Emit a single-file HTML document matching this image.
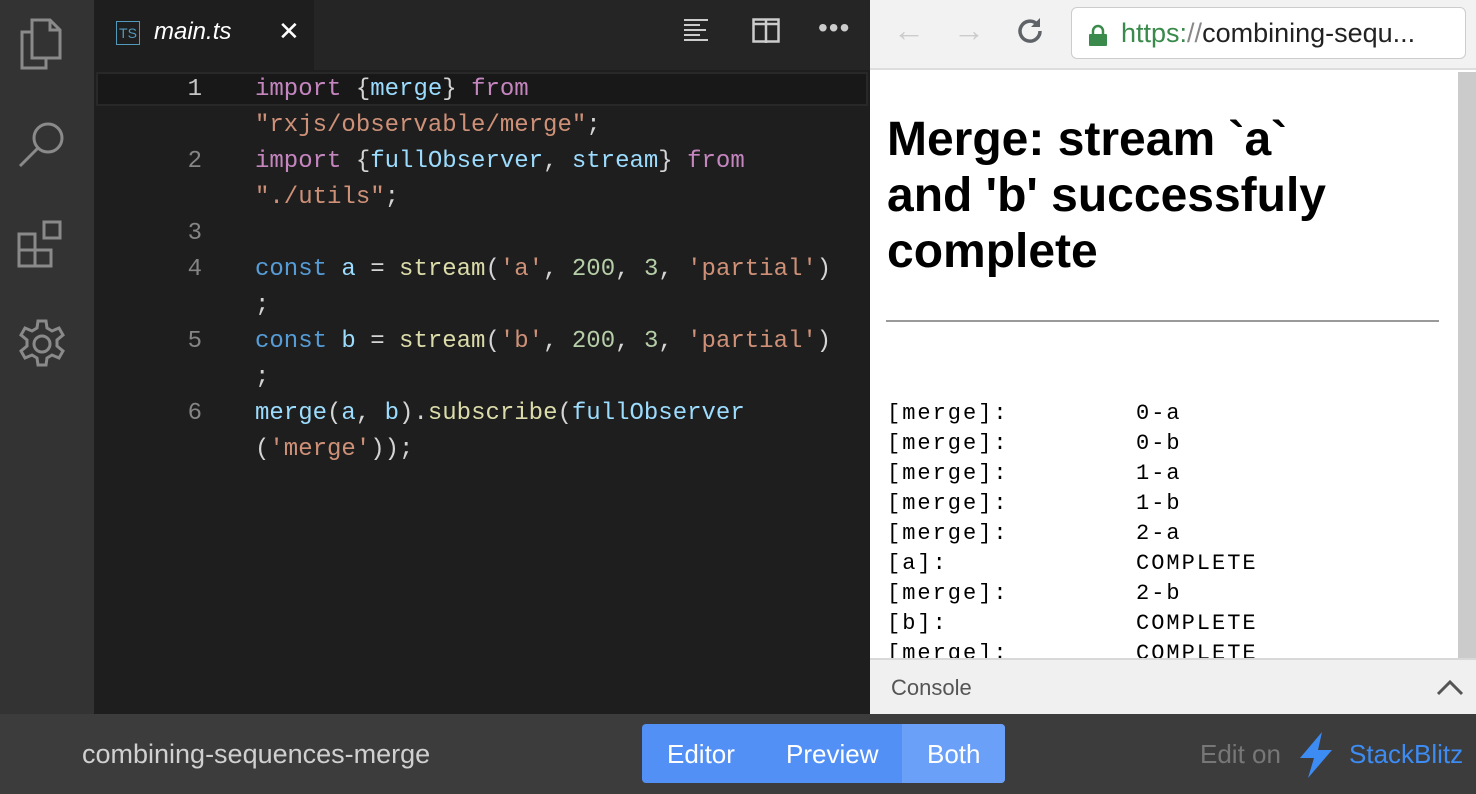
<!DOCTYPE html>
<html><head><meta charset="utf-8"><style>
*{margin:0;padding:0;box-sizing:border-box}
body{width:1476px;height:794px;overflow:hidden;position:relative;background:#1e1e1e;font-family:"Liberation Sans",sans-serif}
.abs{position:absolute}
#act{left:0;top:0;width:94px;height:714px;background:#333333}
#tabs{left:94px;top:0;width:776px;height:70px;background:#252526}
#tab{left:94px;top:0;width:220px;height:70px;background:#1e1e1e}
#ed{left:94px;top:70px;width:776px;height:644px;background:#1e1e1e}
.code{font-family:"Liberation Mono",monospace;font-size:24px;line-height:36px;white-space:pre;color:#d4d4d4}
.ln{position:absolute;left:150px;width:52px;text-align:right;color:#858585;font-family:"Liberation Mono",monospace;font-size:24px;line-height:36px}
.k{color:#c586c0}.s{color:#ce9178}.v{color:#9cdcfe}.b{color:#569cd6}.f{color:#dcdcaa}.n{color:#b5cea8}.t{color:#4ec9b0}
#prev{left:870px;top:0;width:606px;height:714px;background:#fff}
#bar{left:870px;top:0;width:606px;height:70px;background:#f2f2f2;border-bottom:2px solid #ddd}
#url{left:1071px;top:7px;width:395px;height:52px;background:#fff;border:1px solid #ccc;border-radius:6px}
.pre{font-family:"Liberation Mono",monospace;font-size:22px;letter-spacing:2px;line-height:30px;color:#000;white-space:pre}
#bottom{left:0;top:714px;width:1476px;height:80px;background:#3c3c3c}
</style></head><body>
<div class="abs" id="act"></div>
<svg class="abs" style="left:16px;top:18px" width="50" height="52" viewBox="0 0 50 52" fill="none" stroke="#8a8a8a" stroke-width="3"><path d="M16 2h18l10 10v28H16z"/><path d="M34 2v10h10"/><path d="M16 14H6v36h24v-10"/></svg>
<svg class="abs" style="left:16px;top:118px" width="52" height="52" viewBox="0 0 52 52" fill="none" stroke="#8a8a8a" stroke-width="3"><circle cx="32" cy="20" r="14"/><path d="M22 30L4 48"/></svg>
<svg class="abs" style="left:16px;top:218px" width="52" height="52" viewBox="0 0 52 52" fill="none" stroke="#8a8a8a" stroke-width="3"><rect x="3" y="16" width="16" height="16"/><rect x="3" y="32" width="16" height="16"/><rect x="19" y="32" width="16" height="16"/><rect x="28" y="4" width="16" height="16"/></svg>
<svg class="abs" style="left:16px;top:318px" width="52" height="52" viewBox="0 0 52 52" fill="none" stroke="#8a8a8a" stroke-width="3"><circle cx="26" cy="26" r="8"/><path d="M22 3h8l1 7 5 3 7-3 4 7-6 5v6l6 5-4 7-7-3-5 3-1 7h-8l-1-7-5-3-7 3-4-7 6-5v-6l-6-5 4-7 7 3 5-3z"/></svg>
<div class="abs" id="tabs"></div>
<div class="abs" id="tab"></div>
<div class="abs" style="left:116px;top:21px;width:24px;height:24px;border:1.5px solid #519aba;color:#519aba;font-size:14px;line-height:22px;text-align:center;font-family:'Liberation Sans'">TS</div>
<div class="abs" style="left:154px;top:18px;color:#fff;font-style:italic;font-size:24px">main.ts</div>
<div class="abs" style="left:278px;top:16px;color:#fff;font-size:26px">✕</div>
<svg class="abs" style="left:683px;top:18px" width="26" height="26" viewBox="0 0 26 26" stroke="#ccc" stroke-width="2"><path d="M1 2h24M1 7h16M1 12h22M1 17h16M1 22h24"/></svg>
<svg class="abs" style="left:752px;top:18px" width="28" height="26" viewBox="0 0 28 26" fill="none" stroke="#ccc" stroke-width="2.5"><rect x="1.5" y="1.5" width="25" height="22"/><path d="M14 1v24M1 6h26"/></svg>
<div class="abs" style="left:818px;top:12px;color:#ccc;font-size:28px;letter-spacing:1px">•••</div>
<div class="abs" id="ed"></div>
<div class="abs" style="left:96px;top:72px;width:772px;height:34px;border:2px solid #282828;background:#181818"></div>
<div class="ln" style="top:72px;color:#c6c6c6">1</div>
<div class="ln" style="top:144px">2</div>
<div class="ln" style="top:216px">3</div>
<div class="ln" style="top:252px">4</div>
<div class="ln" style="top:324px">5</div>
<div class="ln" style="top:396px">6</div>
<div class="abs code" style="left:255px;top:72px"><span class="k">import</span> {<span class="v">merge</span>} <span class="k">from</span>
<span class="s">"rxjs/observable/merge"</span>;
<span class="k">import</span> {<span class="v">fullObserver</span>, <span class="v">stream</span>} <span class="k">from</span>
<span class="s">"./utils"</span>;

<span class="b">const</span> <span class="v">a</span> = <span class="f">stream</span>(<span class="s">'a'</span>, <span class="n">200</span>, <span class="n">3</span>, <span class="s">'partial'</span>)
;
<span class="b">const</span> <span class="v">b</span> = <span class="f">stream</span>(<span class="s">'b'</span>, <span class="n">200</span>, <span class="n">3</span>, <span class="s">'partial'</span>)
;
<span class="v">merge</span>(<span class="v">a</span>, <span class="v">b</span>).<span class="f">subscribe</span>(<span class="v">fullObserver</span>
(<span class="s">'merge'</span>));</div>
<div class="abs" id="prev"></div>
<div class="abs" id="bar"></div>
<div class="abs" style="left:893px;top:12px;color:#ccc;font-size:32px">←</div>
<div class="abs" style="left:953px;top:12px;color:#ccc;font-size:32px">→</div>
<svg class="abs" style="left:1014px;top:15px" width="32" height="32" viewBox="0 0 32 32" fill="none" stroke="#5f6368" stroke-width="3.5"><path d="M26 16a10 10 0 1 1-3-7"/><path d="M26 3v9h-9z" fill="#5f6368" stroke="none"/></svg>
<div class="abs" id="url"></div>
<svg class="abs" style="left:1088px;top:24px" width="20" height="22" viewBox="0 0 20 22"><path d="M5 10V7a5 5 0 0 1 10 0v3" fill="none" stroke="#3a8a4c" stroke-width="2.5"/><rect x="1" y="10" width="18" height="12" rx="1" fill="#3a8a4c"/></svg>
<div class="abs" style="left:1121px;top:18px;font-size:27px;color:#222;white-space:nowrap"><span style="color:#3a8a4c">https:</span><span style="color:#888">//</span>combining-sequ...</div>
<div class="abs" style="left:1458px;top:72px;width:18px;height:588px;background:#cbcbcb"></div>
<div class="abs" style="left:887px;top:112px;font-size:48px;font-weight:bold;line-height:56px;color:#000;white-space:nowrap">Merge: stream `a`<br>and 'b' successfuly<br>complete</div>
<div class="abs" style="left:886px;top:320px;width:553px;height:2px;background:#9a9a9a"></div>
<div class="abs pre" style="left:887px;top:399px">[merge]:
[merge]:
[merge]:
[merge]:
[merge]:
[a]:
[merge]:
[b]:
[merge]:</div>
<div class="abs pre" style="left:1136px;top:399px">0-a
0-b
1-a
1-b
2-a
COMPLETE
2-b
COMPLETE
COMPLETE</div>
<div class="abs" style="left:870px;top:658px;width:606px;height:56px;background:#f0f0f0;border-top:2px solid #d8d8d8"></div>
<div class="abs" style="left:891px;top:675px;font-size:22px;color:#555">Console</div>
<svg class="abs" style="left:1436px;top:678px" width="28" height="18" viewBox="0 0 28 18" fill="none" stroke="#555" stroke-width="3"><path d="M2 16L14 4l12 12"/></svg>
<div class="abs" id="bottom"></div>
<div class="abs" style="left:82px;top:739px;font-size:27px;color:#d0d0d0">combining-sequences-merge</div>
<div class="abs" style="left:642px;top:724px;width:363px;height:59px;background:#5390f5;border-radius:4px;overflow:hidden"><div style="position:absolute;left:260px;top:0;width:103px;height:59px;background:#6aa0f7"></div></div>
<div class="abs" style="left:667px;top:739px;font-size:26px;color:#fff">Editor</div>
<div class="abs" style="left:786px;top:739px;font-size:26px;color:#fff">Preview</div>
<div class="abs" style="left:927px;top:739px;font-size:26px;color:#fff">Both</div>
<div class="abs" style="left:1200px;top:739px;font-size:26px;color:#777">Edit on</div>
<svg class="abs" style="left:1298px;top:732px" width="36" height="46" viewBox="0 0 36 46"><path d="M24 0L2 26h14L10 46 34 18H20z" fill="#3c8cf3"/></svg>
<div class="abs" style="left:1349px;top:739px;font-size:26px;color:#3c8cf3">StackBlitz</div>
</body></html>
